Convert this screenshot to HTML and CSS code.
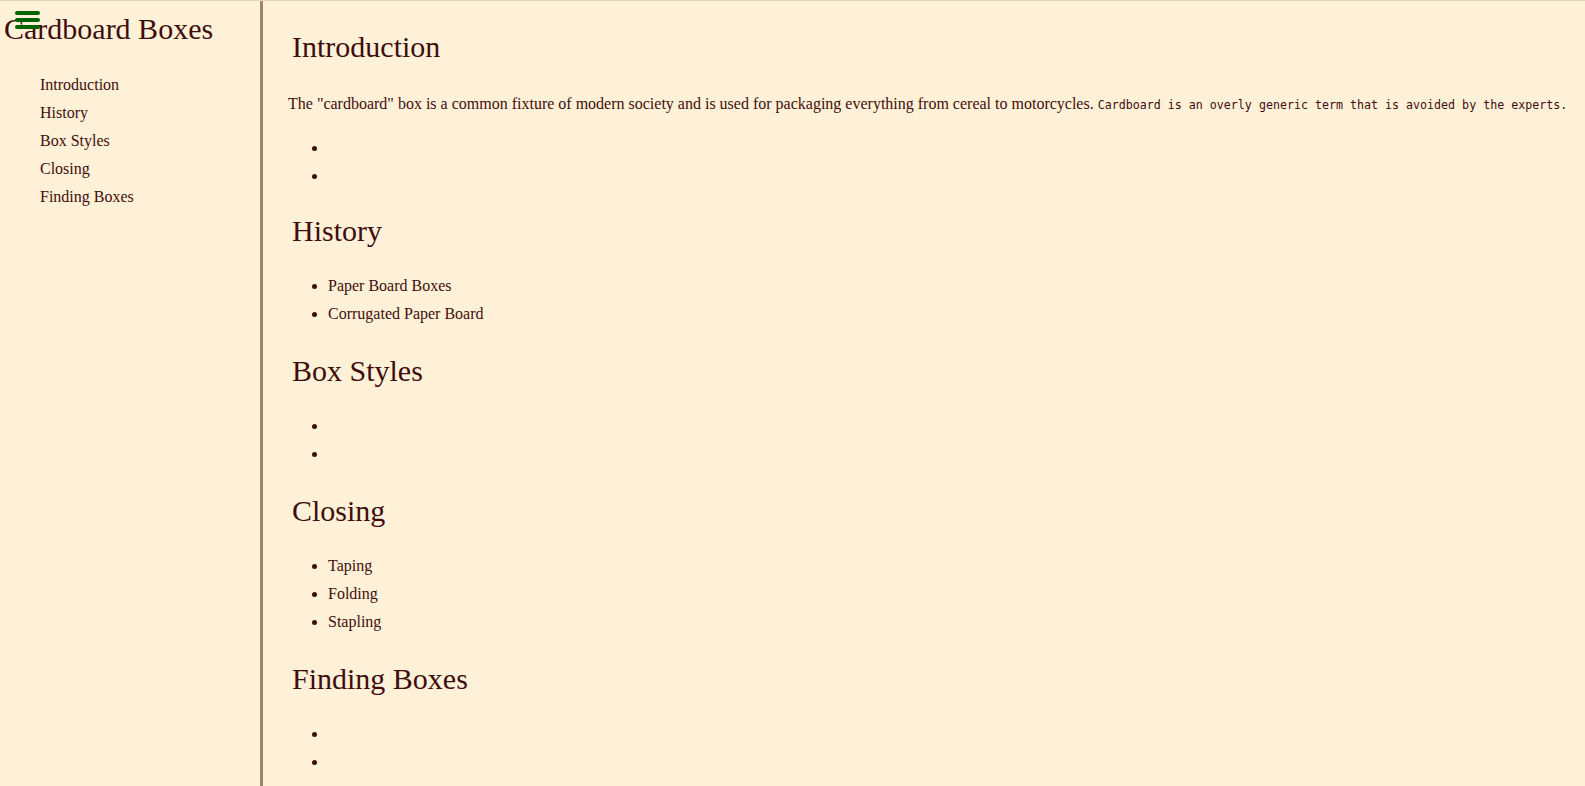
FILE: index.html
```html
<!DOCTYPE html>
<html lang="en">
<head>
<meta charset="utf-8">
<title>Cardboard Boxes</title>
<link rel="stylesheet" href="styles.css">
</head>
<body>
<div class="page">
  <aside class="sidebar">
    <button class="menu-toggle" aria-label="Menu">
      <span class="bar"></span>
      <span class="bar"></span>
      <span class="bar"></span>
    </button>
    <h1 class="site-title">Cardboard Boxes</h1>
    <nav>
      <ul class="nav-list">
        <li>Introduction</li>
        <li>History</li>
        <li>Box Styles</li>
        <li>Closing</li>
        <li>Finding Boxes</li>
      </ul>
    </nav>
  </aside>
  <main class="content">
    <section class="section intro">
      <h2 class="section-title">Introduction</h2>
      <p class="lead">The "cardboard" box is a common fixture of modern society and is used for packaging everything from cereal to motorcycles. <code class="note">Cardboard is an overly generic term that is avoided by the experts.</code></p>
      <ul class="items">
        <li></li>
        <li></li>
      </ul>
    </section>
    <section class="section">
      <h2 class="section-title">History</h2>
      <ul class="items">
        <li>Paper Board Boxes</li>
        <li>Corrugated Paper Board</li>
      </ul>
    </section>
    <section class="section">
      <h2 class="section-title">Box Styles</h2>
      <ul class="items">
        <li></li>
        <li></li>
      </ul>
    </section>
    <section class="section">
      <h2 class="section-title">Closing</h2>
      <ul class="items">
        <li>Taping</li>
        <li>Folding</li>
        <li>Stapling</li>
      </ul>
    </section>
    <section class="section">
      <h2 class="section-title">Finding Boxes</h2>
      <ul class="items">
        <li></li>
        <li></li>
      </ul>
    </section>
  </main>
</div>
</body>
</html>
```

FILE: styles.css
```css
html, body {
  margin: 0;
  padding: 0;
  height: 100%;
  overflow: hidden;
}

body {
  background: #fff1d7;
  color: #3f0d0d;
  font-family: "Liberation Serif", "Times New Roman", serif;
  font-size: 16px;
  line-height: 28px;
  border-top: 1px solid #e3d6bb;
  box-sizing: border-box;
}

.page {
  display: flex;
  height: 100%;
}

.sidebar {
  position: relative;
  flex: 0 0 263px;
  box-sizing: border-box;
  padding: 10px 0 0 4px;
  border-right: 3px solid #a2826c;
}

.menu-toggle {
  position: absolute;
  left: 15px;
  top: 10px;
  width: 25px;
  padding: 0;
  border: 0;
  background: transparent;
  display: flex;
  flex-direction: column;
  gap: 3px;
  cursor: pointer;
}

.menu-toggle .bar {
  display: block;
  height: 4px;
  width: 25px;
  border-radius: 2px;
  background: #006400;
}

.site-title {
  margin: 0;
  font-size: 30px;
  font-weight: normal;
  line-height: 36px;
  white-space: nowrap;
}

.nav-list {
  list-style: none;
  margin: 24px 0 0;
  padding: 0 0 0 36px;
}

.content {
  flex: 1 1 auto;
  min-width: 0;
  padding: 3px 0 0 25px;
}

.section-title {
  margin: 25px 0 23px 4px;
  font-size: 30px;
  font-weight: normal;
  line-height: 36px;
}

.intro + .section .section-title {
  margin-top: 23px;
}

.intro .items {
  margin-bottom: 0;
}

.lead {
  margin: 0 0 15px;
  padding-top: 2px;
  white-space: nowrap;
}

.note {
  font-family: "DejaVu Sans Mono", "Liberation Mono", monospace;
  font-size: 11.65px;
}

.items {
  margin: 15px 0;
  padding-left: 40px;
  list-style: disc;
}
```
